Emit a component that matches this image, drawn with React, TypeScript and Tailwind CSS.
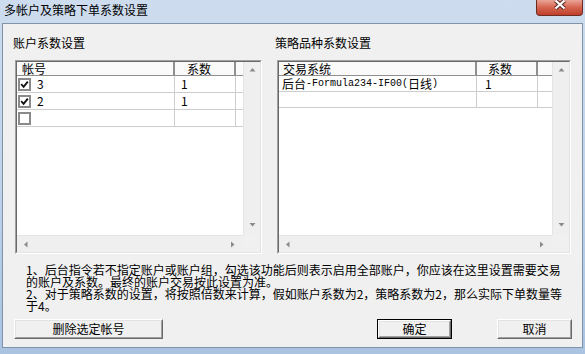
import React from 'react';

type Col = { w: number; label: string; pl: number };

function Arrow({ dir }: { dir: 'up' | 'down' | 'left' | 'right' }) {
  const d = {
    up: 'M0.5 4.5 L3.5 1 L6.5 4.5 Z',
    down: 'M0.5 1 L3.5 4.5 L6.5 1 Z',
    left: 'M4.5 0.5 L1 3.5 L4.5 6.5 Z',
    right: 'M1 0.5 L4.5 3.5 L1 6.5 Z',
  }[dir];
  const vertical = dir === 'up' || dir === 'down';
  return (
    <svg width={vertical ? 7 : 6} height={vertical ? 6 : 7} viewBox={vertical ? '0 0 7 6' : '0 0 6 7'}>
      <path d={d} fill="#8a8a8a" />
    </svg>
  );
}

function CheckBox({ checked }: { checked: boolean }) {
  return (
    <div className="w-[13px] h-[13px] border-2 border-[#8a8a8a] bg-white flex items-center justify-center">
      {checked && (
        <svg width="9" height="9" viewBox="0 0 9 9">
          <path d="M1.2 4.2 L3.6 6.8 L7.8 1.6" stroke="#111" strokeWidth="1.9" fill="none" />
        </svg>
      )}
    </div>
  );
}

function ListBox({
  width,
  cols,
  rowH,
  rows,
}: {
  width: number;
  cols: Col[];
  rowH: number;
  rows: { cells: React.ReactNode[]; pl: number[] }[];
}) {
  return (
    <div
      className="ml-[2px] mt-[10px] h-[194px] border border-t-[#a0a0a0] border-l-[#a0a0a0] border-r-white border-b-white"
      style={{ width }}
    >
      <div className="h-full flex border border-t-[#696969] border-l-[#696969] border-r-[#e3e3e3] border-b-[#e3e3e3] bg-white">
        <div className="flex-1 flex flex-col min-w-0">
          <div className="flex-1">
            {/* header */}
            <div className="flex h-[14px] bg-[#fafafa] border-b border-[#8f8f8f]">
              {cols.map((c, i) => (
                <div
                  key={i}
                  className={`shrink-0 leading-[13px] ${i < cols.length - 1 ? 'border-r-2 border-[#8f8f8f]' : ''}`}
                  style={{ width: c.w, paddingLeft: c.pl }}
                >
                  {c.label}
                </div>
              ))}
            </div>
            {rows.map((r, ri) => (
              <div key={ri} className="flex border-b border-[#cdcdcd]" style={{ height: rowH }}>
                {cols.map((c, i) => (
                  <div
                    key={i}
                    className={`shrink-0 flex items-center whitespace-nowrap ${i < cols.length - 1 ? 'border-r border-[#cdcdcd]' : ''}`}
                    style={{ width: c.w, paddingLeft: r.pl[i] ?? 0 }}
                  >
                    {r.cells[i]}
                  </div>
                ))}
              </div>
            ))}
          </div>
          {/* horizontal scrollbar */}
          <div className="h-[17px] shrink-0 bg-[#efefef] border-t border-[#e4e4e4] flex items-center justify-between pl-[6px] pr-[7px]">
            <Arrow dir="left" />
            <Arrow dir="right" />
          </div>
        </div>
        {/* vertical scrollbar */}
        <div className="w-[17px] shrink-0 flex flex-col">
          <div className="flex-1 bg-[#efefef] border-l border-[#e4e4e4] flex flex-col items-center justify-between pt-[5px] pb-[7px]">
            <Arrow dir="up" />
            <Arrow dir="down" />
          </div>
          <div className="h-[17px] bg-[#f0f0f0]" />
        </div>
      </div>
    </div>
  );
}

function Button({ label, def, w, className = '' }: { label: string; def?: boolean; w: number; className?: string }) {
  const inner = (
    <div className="h-full border border-t-white border-l-white border-r-[#696969] border-b-[#696969]">
      <div className="h-full flex items-center justify-center border border-t-[#e3e3e3] border-l-[#e3e3e3] border-r-[#a0a0a0] border-b-[#a0a0a0] bg-[#f0f0f0] leading-[14px]">
        {label}
      </div>
    </div>
  );
  return (
    <div className={`h-[20px] shrink-0 ${def ? 'border border-black' : ''} ${className}`} style={{ width: w }}>
      {inner}
    </div>
  );
}

export default function App() {
  const mono = "font-['Liberation_Mono',monospace] text-[10px]";
  return (
    <div className="w-[585px] h-[354px] flex flex-col overflow-hidden bg-gradient-to-b from-[#cddcee] via-[#bfd3ea] to-[#a9c3e1] font-['Noto_Sans_CJK_SC',sans-serif] text-[12px] text-black">
      {/* title bar */}
      <div className="h-[23px] shrink-0 flex items-start">
        <div className="pl-[4px] pt-[2px] leading-[16px]">多帐户及策略下单系数设置</div>
        <div className="ml-auto mr-[2px] w-[47px] h-[16px] rounded-b-[4px] border border-t-0 border-[#6e2b22] bg-gradient-to-b from-[#eaa497] via-[#d4634f] to-[#bf3f2a] flex justify-center">
          <svg width="14" height="11" viewBox="0 0 14 11" className="mt-[-1px]">
            <path d="M2.5 1.5 L11.5 9.5 M11.5 1.5 L2.5 9.5" stroke="#5a2a24" strokeWidth="4.2" />
            <path d="M2.5 1.5 L11.5 9.5 M11.5 1.5 L2.5 9.5" stroke="#fff" strokeWidth="2.2" />
          </svg>
        </div>
      </div>

      {/* client area */}
      <div className="flex-1 mx-[2px] mb-[6px] border border-[#7f93aa] bg-[#f0f0f0] flex flex-col">
        <div className="flex pt-[12px]">
          <div className="w-[249px] ml-[10px] shrink-0">
            <div className="leading-[14px]">账户系数设置</div>
            <ListBox
              width={247}
              rowH={17}
              cols={[
                { w: 158, label: '帐号', pl: 5 },
                { w: 61, label: '系数', pl: 12 },
                { w: 7, label: '', pl: 0 },
              ]}
              rows={[
                { cells: [<><CheckBox checked /><span className="ml-[6px]">3</span></>, '1', ''], pl: [1, 6, 0] },
                { cells: [<><CheckBox checked /><span className="ml-[6px]">2</span></>, '1', ''], pl: [1, 6, 0] },
                { cells: [<CheckBox checked={false} />, '', ''], pl: [1, 6, 0] },
              ]}
            />
          </div>
          <div className="w-[296px] ml-[13px] shrink-0">
            <div className="leading-[14px]">策略品种系数设置</div>
            <ListBox
              width={294}
              rowH={16}
              cols={[
                { w: 198, label: '交易系统', pl: 4 },
                { w: 61, label: '系数', pl: 11 },
                { w: 14, label: '', pl: 0 },
              ]}
              rows={[
                {
                  cells: [
                    <>
                      <span>后台</span>
                      <span className={mono}>-Formula234-IF00(</span>
                      <span>日线</span>
                      <span className={mono}>)</span>
                    </>,
                    '1',
                    '',
                  ],
                  pl: [3, 8, 0],
                },
                { cells: ['', '', ''], pl: [0, 0, 0] },
              ]}
            />
          </div>
        </div>

        <div className="mt-[10px] pl-[23px] leading-[12px] whitespace-nowrap">
          <div>1、后台指令若不指定账户或账户组，勾选该功能后则表示启用全部账户，你应该在这里设置需要交易</div>
          <div>的账户及系数。最终的账户交易按此设置为准。</div>
          <div>2、对于策略系数的设置，将按照倍数来计算，假如账户系数为2，策略系数为2，那么实际下单数量等</div>
          <div>于4。</div>
        </div>

        <div className="flex mt-[7px] pl-[11px] pr-[10px]">
          <Button label="删除选定帐号" w={149} />
          <Button label="确定" w={75} def className="ml-auto" />
          <Button label="取消" w={75} className="ml-[45px]" />
        </div>
      </div>
    </div>
  );
}
